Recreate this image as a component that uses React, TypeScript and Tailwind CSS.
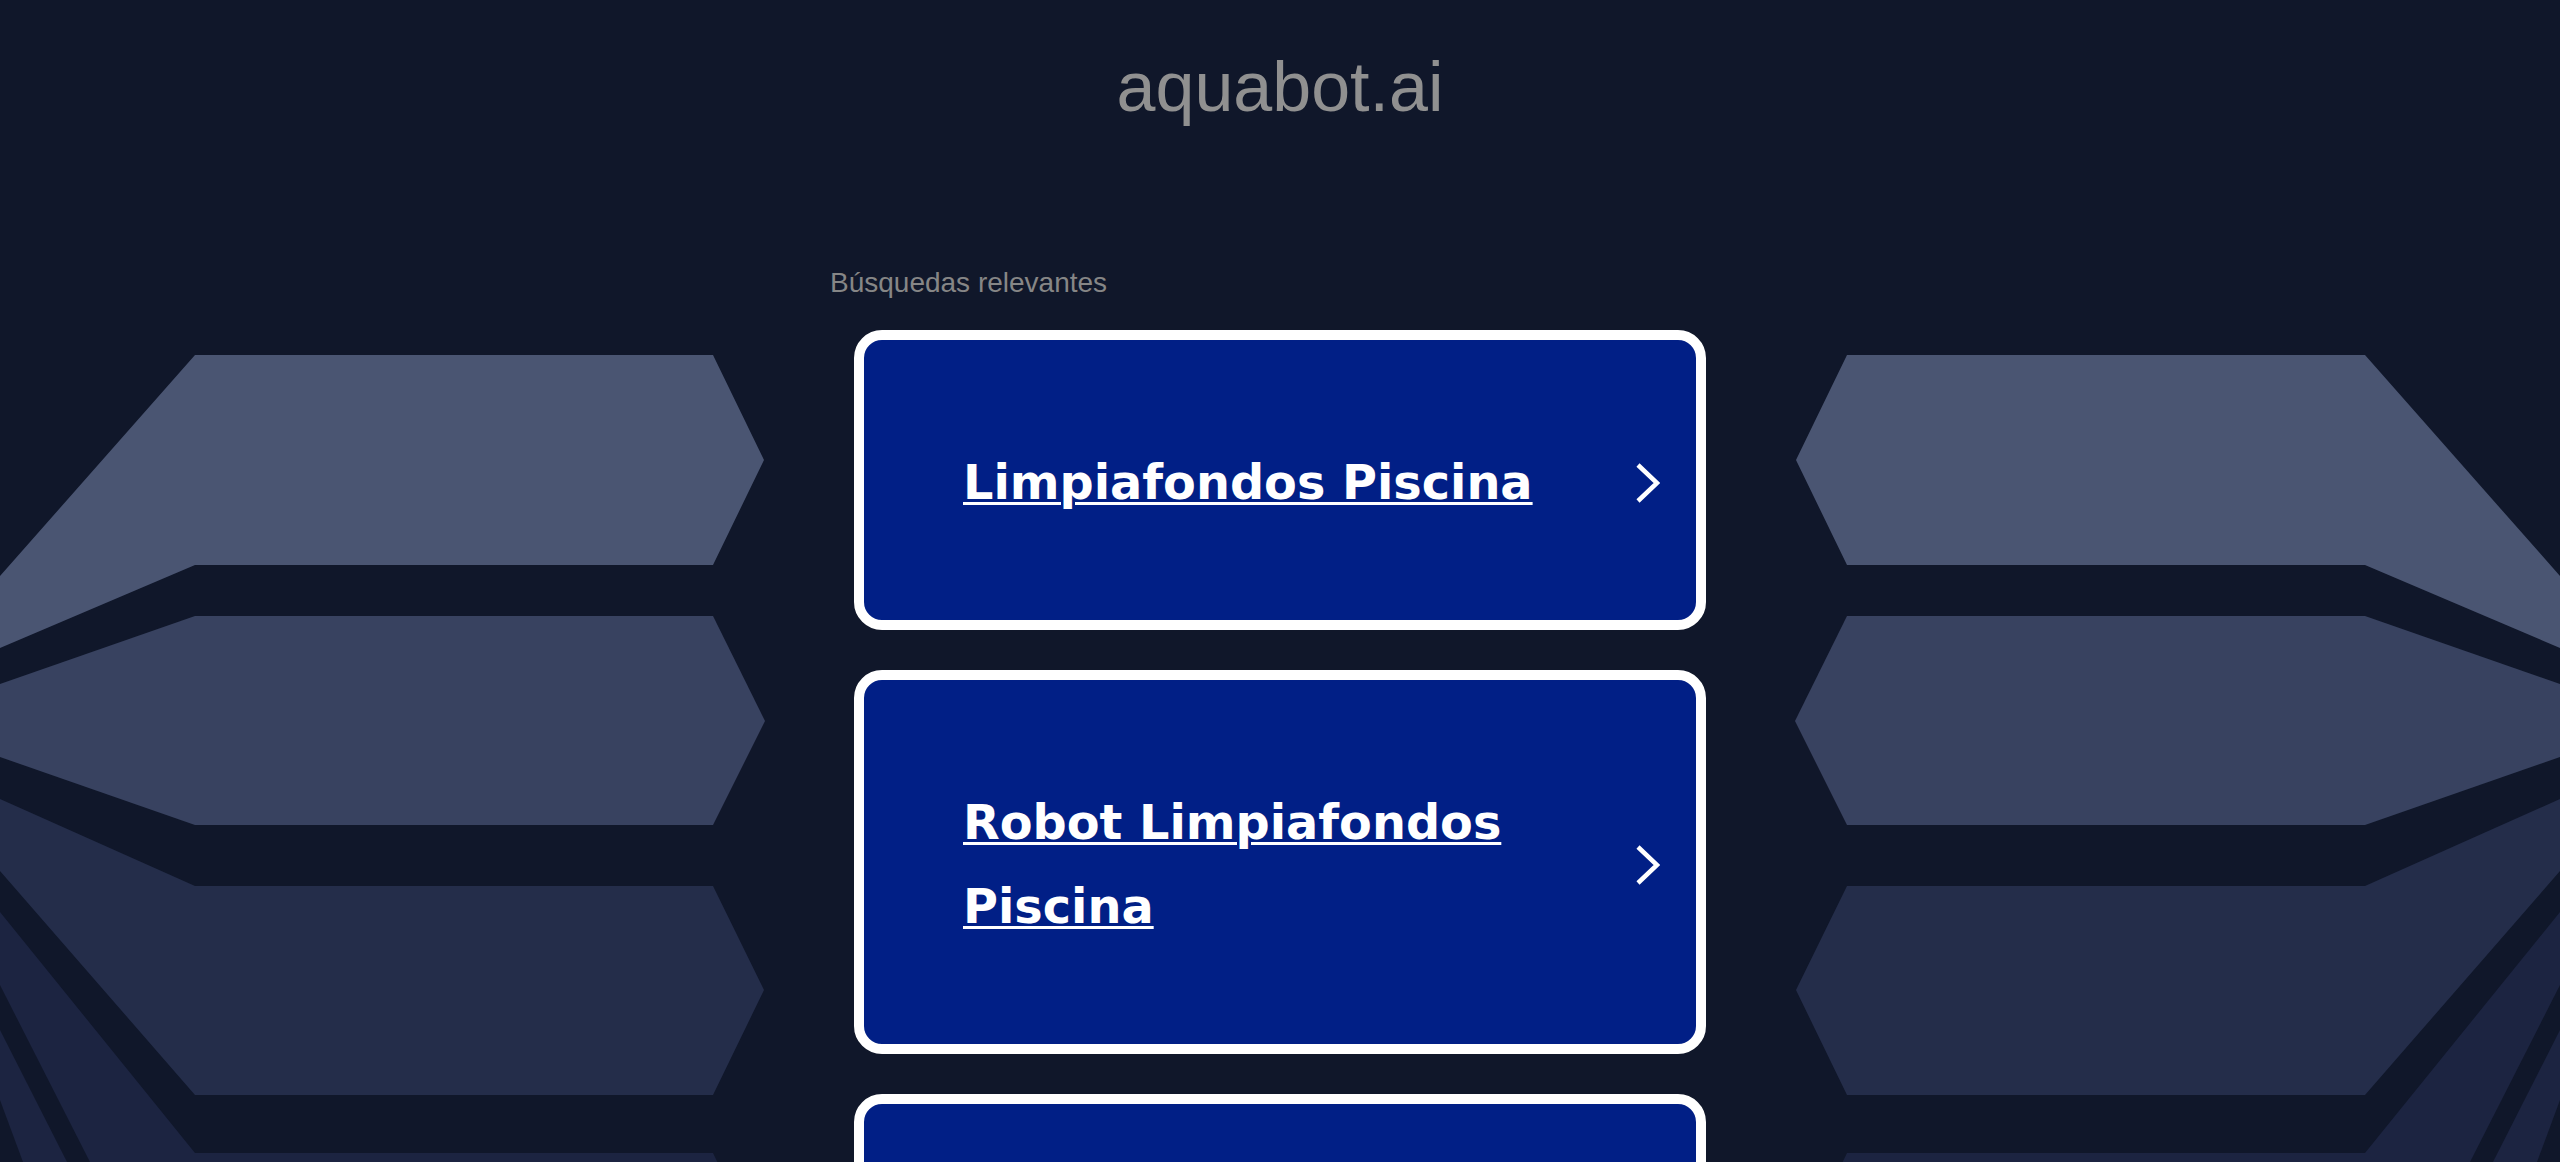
const searches = [
  "Limpiafondos Piscina",
  "Robot Limpiafondos Piscina",
  "Limpiafondos Automático",
];

// fan of blades behind the content, left side; right side is mirrored
const blades = [
  { fill: "#4a5572", points: "0,576 195,355 713,355 764,460 713,565 195,565 0,648" },
  { fill: "#384260", points: "0,684 195,616 713,616 765,721 713,825 195,825 0,757" },
  { fill: "#242d4a", points: "0,799 195,886 713,886 764,990 713,1095 195,1095 0,871" },
  { fill: "#1c2441", points: "0,912 195,1153 713,1153 764,1258 713,1300 0,1300" },
];

function Backdrop() {
  const shapes = (
    <>
      {blades.map((b) => (
        <polygon key={b.points} points={b.points} fill={b.fill} />
      ))}
      <polygon points="0,985 90,1162 67,1162 0,1030" fill="#10172a" />
      <polygon points="0,1100 23,1162 0,1162" fill="#10172a" />
    </>
  );

  return (
    <svg
      className="pointer-events-none absolute left-0 top-0 h-[1162px] w-[2560px]"
      viewBox="0 0 2560 1162"
    >
      {shapes}
      <g transform="translate(2560 0) scale(-1 1)">{shapes}</g>
    </svg>
  );
}

function Chevron() {
  return (
    <svg className="h-[40px] w-[24px] shrink-0" viewBox="0 0 24 40" fill="none">
      <polyline
        points="2,2 21,20 2,38"
        stroke="white"
        strokeWidth="4.5"
        strokeLinejoin="miter"
      />
    </svg>
  );
}

export default function App() {
  return (
    <div className="relative min-h-screen overflow-hidden bg-[#10172a] font-['Liberation_Sans',Arial,sans-serif]">
      <Backdrop />
      <div className="relative flex flex-col items-center pb-[80px]">
        <h1 className="mt-[52px] text-[70px] leading-[70px] text-[#909090]">
          aquabot.ai
        </h1>
        <div className="mt-[147px] w-[900px]">
          <p className="text-[28px] leading-[28px] text-[#868686]">
            Búsquedas relevantes
          </p>
          <div className="mt-[33px] flex flex-col gap-[40px] px-[24px]">
            {searches.map((s) => (
              <a
                key={s}
                href="#"
                className="flex items-center gap-[30px] rounded-[28px] border-[10px] border-white bg-[#011f86] pb-[95px] pl-[99px] pr-[36px] pt-[101px] text-white"
              >
                <span className="flex-1 font-['DejaVu_Sans',Verdana,sans-serif] text-[47.75px] font-bold leading-[84px] underline decoration-[3px] underline-offset-[3px]">
                  {s}
                </span>
                <Chevron />
              </a>
            ))}
          </div>
        </div>
      </div>
    </div>
  );
}
